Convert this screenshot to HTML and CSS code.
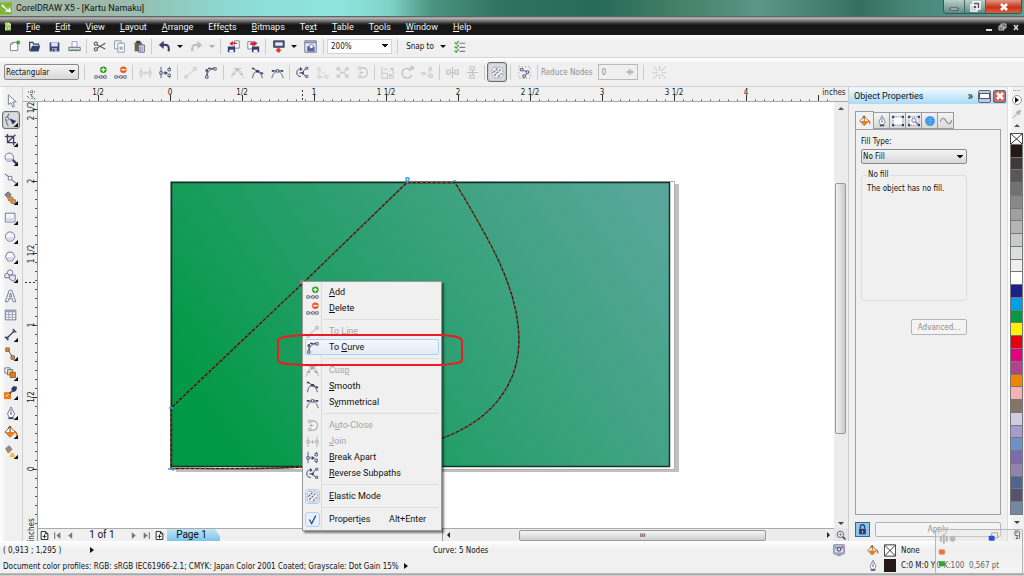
FILE: index.html
```html
<!DOCTYPE html>
<html lang="en">
<head>
<meta charset="utf-8">
<title>CorelDRAW X5 - [Kartu Namaku]</title>
<link rel="stylesheet" href="styles.css">
</head>
<body>
<svg class="defs" aria-hidden="true">
  <defs>
    <g id="corner"><path d="M16 11v5h-5z" fill="#111"/></g>
    <symbol id="logo" viewBox="0 0 16 16"><path d="M0 0h16v16H0z" fill="#7db733"/><path d="M3 2l9 7 1-4 2 8-9-1 3-2-7-5z" fill="#fff"/><path d="M5 4l6 5" stroke="#3b7a1c"/></symbol>
    <symbol id="doc" viewBox="0 0 16 16"><path d="M2 0h8l4 4v12H2z" fill="#b8dd7c"/><path d="M10 0v4h4" fill="#fff"/><path d="M3 5l7 5 1-3 2 7-7-1 2-2-5-4z" fill="#fff" stroke="#3f7b1d"/></symbol>
    <symbol id="new" viewBox="0 0 16 16"><path d="M3 5l2-2h7v10H3z" fill="#fff" stroke="#687090"/><path d="M3 5h3V3" fill="none" stroke="#687090"/><circle cx="12.500" cy="3" r="2.500" fill="#3fa535"/></symbol>
    <symbol id="open" viewBox="0 0 16 16"><path d="M2 13V3h4l1 2h6v2" fill="none" stroke="#34406c" stroke-width="1.500"/><path d="M2 14l3-7h10l-2 7z" fill="#34406c"/></symbol>
    <symbol id="save" viewBox="0 0 16 16"><path d="M2 3h12v11H2z" fill="#3a4678"/><path d="M4 3h8v5H4z" fill="#dfe3f2"/><path d="M5 10h6v4H5z" fill="#a9b1d0"/><path d="M6 11h2v3H6z" fill="#34406c"/></symbol>
    <symbol id="print" viewBox="0 0 16 16"><path d="M5 2h6v7H5z" fill="#fff" stroke="#8490b0"/><path d="M1 9h14v4H1z" fill="#dfe3ea" stroke="#4c567c"/><path d="M3 12h10" stroke="#59a04a"/></symbol>
    <symbol id="cut" viewBox="0 0 16 16"><g fill="none" stroke="#4a4f63" stroke-width="1.300"><circle cx="3.500" cy="4.500" r="2"/><circle cx="3.500" cy="11.500" r="2"/><path d="M5 6l10 5M5 10l10-6"/></g></symbol>
    <symbol id="copy" viewBox="0 0 16 16"><path d="M2 1h8v10H2z" fill="#f4f6fa" stroke="#7d88a5"/><path d="M6 4h8v11H6z" fill="#fff" stroke="#7d88a5"/><path d="M8 8h4v4H8z" fill="#9cb7a9"/></symbol>
    <symbol id="paste" viewBox="0 0 16 16"><path d="M2 3h9v11H2z" fill="#6f6347"/><path d="M4 1h5v3H4z" fill="#3b3a3c"/><path d="M7 6h7v9H7z" fill="#d2dae8" stroke="#4c567c"/><path d="M9 8v6M11 8v6" stroke="#7d88a5"/></symbol>
    <symbol id="undo" viewBox="0 0 16 16"><path d="M6 6h3c4 0 5 3 4 8" fill="none" stroke="#3c4266" stroke-width="2.500"/><path d="M1 6l6-5v10z" fill="#3c4266"/></symbol>
    <symbol id="redo" viewBox="0 0 16 16"><path d="M10 6H7c-4 0-5 3-4 8" fill="none" stroke="#bfbfbf" stroke-width="2.500"/><path d="M15 6L9 1v10z" fill="#bfbfbf"/></symbol>
    <symbol id="import" viewBox="0 0 16 16"><path d="M9 1h6v9H9z" fill="#fff" stroke="#687090"/><path d="M1 8h9v7H1z" fill="#34406c"/><path d="M3 12h5v3H3z" fill="#fff"/><path d="M12 3v2H7v2L3 5l4-4v2z" fill="#d81e2a"/></symbol>
    <symbol id="export" viewBox="0 0 16 16"><path d="M1 2h6v9H1z" fill="#fff" stroke="#687090"/><path d="M6 8h9v7H6z" fill="#34406c"/><path d="M8 12h5v3H8z" fill="#fff"/><path d="M4 3v3h4v2l5-4-5-3v2z" fill="#d81e2a"/></symbol>
    <symbol id="launch" viewBox="0 0 16 16"><path d="M2 1h13v8H2z" fill="#515a7c" stroke="#2c3350"/><path d="M4 3h9v4H4z" fill="#e8ecf5"/><path d="M8 16l-4-4h2v-2h4v2h2z" fill="#e4361e"/></symbol>
    <symbol id="welcome" viewBox="0 0 16 16"><path d="M1 1h14v14H1z" fill="#e6eaf5" stroke="#55608c"/><path d="M1 2h14v2H1z" fill="#7c87b0"/><path d="M4 14V8l3-1 1 3 5-2v6z" fill="#56629a"/><circle cx="9" cy="8" r="2.500" fill="#fff" stroke="#5a6795"/></symbol>
    <symbol id="options" viewBox="0 0 16 16"><path d="M8 4h7M8 9h7M8 14h7" stroke="#7678a0" stroke-width="1.500"/><path d="M2 3l2 2 3-4M2 8l2 2 3-4M2 13l2 2 3-4" fill="none" stroke="#3f9a38" stroke-width="1.500"/></symbol>

    <symbol id="add" viewBox="0 0 16 16"><path d="M1 12h3v3H1zM7 12h3v3H7zM12 12h3v3h-3zM4 13.500h3M10 13.500h2" fill="#fff" stroke="#4d5274"/><circle cx="11.500" cy="4.500" r="4" fill="#2f9c1e"/><path d="M9 4.500h5M11.500 2v5" stroke="#fff" stroke-width="1.500"/></symbol>
    <symbol id="del" viewBox="0 0 16 16"><path d="M1 12h3v3H1zM7 12h3v3H7zM12 12h3v3h-3zM4 13.500h3M10 13.500h2" fill="#fff" stroke="#4d5274"/><circle cx="11.500" cy="4.500" r="4" fill="#f2561d"/><path d="M9 4.500h5" stroke="#fff" stroke-width="1.700"/></symbol>
    <symbol id="join" viewBox="0 0 16 16"><g fill="none" stroke="currentColor"><path d="M1 7h3v3H1zM2.500 7V2M2.500 10v5M12 7h3v3h-3zM13.500 7V2M13.500 10v5M5 8.500h6M8 6.500v4"/></g></symbol>
    <symbol id="break" viewBox="0 0 16 16"><g fill="none" stroke="currentColor"><path d="M1 7h3v3H1zM2.500 7V1M2.500 10v5M11 3h3v3h-3zM11 10h3v3h-3zM13 3V1M13 13v2M5 8.500h5"/></g><path d="M7 6l4 2.500L7 11z" fill="currentColor"/></symbol>
    <symbol id="line" viewBox="0 0 16 16"><path d="M1 12h3v3H1zM12 2h3v3h-3zM4 12l8-7" fill="none" stroke="currentColor"/></symbol>
    <symbol id="curve" viewBox="0 0 16 16"><path d="M2 12h3v3H2zM12 2h3v3h-3zM3.500 12V7M4 12c0-5 3-8 8-8.500M12 3H7" fill="none" stroke="currentColor"/><path d="M2 4h3v3H2zM5 2h3v2H5z" fill="currentColor"/></symbol>
    <symbol id="cusp" viewBox="0 0 16 16"><path d="M1 15C1 9 4 5 8 4c4 1 6 5 7 11M8 5l-5 6M8 5l4 6M3 3h10" fill="none" stroke="currentColor"/><path d="M6 3h4v3H6zM2 9h3v2H2zM11 9h3v2h-3z" fill="currentColor"/></symbol>
    <symbol id="smooth" viewBox="0 0 16 16"><path d="M2 15C2 11 4 7 7 6.500c4 1 6 4 7 8.500M2 3l12 6" fill="none" stroke="currentColor"/><path d="M1 2h3v2H1zM6 5h4v3H6zM12 8h3v2h-3z" fill="currentColor"/></symbol>
    <symbol id="sym" viewBox="0 0 16 16"><path d="M1 15C2 10 5 6.500 8 6.500S14 10 15 15M2 6h12" fill="none" stroke="currentColor"/><path d="M1 5h3v2H1zM12 5h3v2h-3z" fill="currentColor"/><path d="M6.500 4.500h3v3h-3z" fill="#fff" stroke="currentColor"/></symbol>
    <symbol id="reverse" viewBox="0 0 16 16"><path d="M6 4C2 3 1 6 1 8.500S3 13 6 13M12 3c-2 1-3 4-3 5s1 4 3 5M4 8.500h5" fill="none" stroke="currentColor" stroke-width="1.200"/><path d="M5 1l3 3-3 2zM9 6v5L6 8.500z" fill="currentColor"/><path d="M12 1.500h2.500V4H12zM12 11.500h2.500V14H12z" fill="#fff" stroke="currentColor"/></symbol>
    <symbol id="extract" viewBox="0 0 16 16"><path d="M2 2h3v3H2zM2 12h3v3H2zM12 12h3v3h-3zM3.500 5v7M5 13.500h7M5 5l7 7" fill="none" stroke="currentColor" stroke-dasharray="2 1"/></symbol>
    <symbol id="extend" viewBox="0 0 16 16"><path d="M2 2l5 6-5 6M14 2L9 8l5 6M1 2h3v3H1zM1 11h3v3H1zM12 2h3v3h-3zM12 11h3v3h-3zM5 8h6" fill="none" stroke="currentColor"/></symbol>
    <symbol id="close" viewBox="0 0 16 16"><path d="M6 2.500c6-1 8 2 8 5.500s-2 7-8 5.500" fill="none" stroke="currentColor" stroke-width="1.300"/><path d="M3 1.500h3v3H3zM3 11.500h3v3H3zM4 8h5M6.500 6v4" fill="none" stroke="currentColor"/></symbol>
    <symbol id="stretch" viewBox="0 0 16 16"><path d="M1 1v14h14V5M1 9h7v6M3 4h5M10 7l4-4" fill="none" stroke="currentColor"/><path d="M11 2h4v4zM10 10h3v3h-3z" fill="currentColor"/></symbol>
    <symbol id="rotate" viewBox="0 0 16 16"><path d="M12 5A6 6 0 1 0 13 11" fill="none" stroke="currentColor" stroke-width="1.700"/><path d="M10 6l5-5M11 1h4v4" fill="none" stroke="currentColor" stroke-width="1.500"/></symbol>
    <symbol id="align" viewBox="0 0 16 16"><path d="M1 8h3v3H1zM10 2h3v3h-3zM10 11h4v3h-4zM4 9h3M7 11l3 2M11 5v6" fill="none" stroke="currentColor"/></symbol>
    <symbol id="refh" viewBox="0 0 16 16"><path d="M1 5h4v5H1zM11 5h4v5h-4zM8 1v14M5 8h6" fill="none" stroke="currentColor" stroke-width="1.300"/></symbol>
    <symbol id="refv" viewBox="0 0 16 16"><path d="M5 1h5v4H5zM5 11h5v4H5zM1 8h14M8 5v6" fill="none" stroke="currentColor" stroke-width="1.300"/></symbol>
    <symbol id="elastic" viewBox="0 0 16 16"><rect x="1.500" y="1.500" width="13" height="13" rx="3" fill="#f2f2f8" stroke="#8a8eaa" stroke-dasharray="3 1"/><path d="M3 8l5-5M4 12l8-8M9 13l4-4" stroke="#6a6f92" stroke-width="1.500" stroke-dasharray="3 1"/></symbol>
    <symbol id="selall" viewBox="0 0 16 16"><path d="M1 1h14v14H1z" fill="none" stroke="#555" stroke-dasharray="1 3"/><path d="M3 3h3v3H3zM10 6h3v3h-3zM6 11h3v3H6z" fill="#fff" stroke="#3c4266"/><path d="M6 5l4 2M11 9l-2 3" stroke="#3c4266"/></symbol>
    <symbol id="box" viewBox="0 0 16 16"><path d="M1 1l5 5M15 1l-5 5M1 15l5-5M15 15l-5-5M8 0v5M8 11v5M0 8h5M11 8h5" stroke="currentColor" stroke-width="1.400" stroke-dasharray="2 1"/></symbol>

    <symbol id="pick" viewBox="0 0 16 16"><path d="M5 1v11l3-2 2 5 2-1-2-5h4z" fill="#fff" stroke="#6d7496"/></symbol>
    <symbol id="shape" viewBox="0 0 16 16"><path d="M6 1c-5 5-4 10-1 14" fill="none" stroke="#687090" stroke-width="1.300"/><path d="M2 5h3v3H2z" fill="#fff" stroke="#687090"/><path d="M6 6l8 3-4 4z" fill="#30385f"/><use href="#corner"/></symbol>
    <symbol id="crop" viewBox="0 0 16 16"><path d="M4 1v10h10M1 4h10v10M4 11l9-9" fill="none" stroke="#3c4266" stroke-width="1.500"/><use href="#corner"/></symbol>
    <symbol id="zoom" viewBox="0 0 16 16"><circle cx="6" cy="6" r="4.800" fill="#f4f4fc" stroke="#5f6688"/><path d="M2 7a4 4 0 0 0 8 0z" fill="#c8cade"/><path d="M10 9l4 4" stroke="#3c4266" stroke-width="2.500"/><use href="#corner"/></symbol>
    <symbol id="free" viewBox="0 0 16 16"><path d="M1 2l5 4M9 9l5 4" stroke="#3c4266"/><path d="M5 5h4v4H5z" fill="#fff" stroke="#687090"/><use href="#corner"/></symbol>
    <symbol id="smart" viewBox="0 0 16 16"><path d="M1 4l4-3 3 3-3 5z" fill="#8a8794" stroke="#55596f"/><path d="M5 7h5v4H5zM8 10h5v4H8z" fill="#e9a052" stroke="#77695f"/><path d="M4 6l3 5 3-1" fill="none" stroke="#e9861b" stroke-width="2"/><use href="#corner"/></symbol>
    <symbol id="rect" viewBox="0 0 16 16"><path d="M1.500 2.500h11v10h-11z" fill="#f5f5fc" stroke="#62688c"/><path d="M2 8h10v4H2z" fill="#d9dbea"/><use href="#corner"/></symbol>
    <symbol id="ellipse" viewBox="0 0 16 16"><circle cx="7" cy="7.500" r="5.300" fill="#f5f5fc" stroke="#62688c"/><path d="M3 8a4 4 0 0 0 8 0z" fill="#d9dbea"/><use href="#corner"/></symbol>
    <symbol id="poly" viewBox="0 0 16 16"><path d="M1.500 7.500l3-5h5l3 5-3 5h-5z" fill="#f5f5fc" stroke="#62688c"/><path d="M3 8h8l-2 4H5z" fill="#d9dbea"/><use href="#corner"/></symbol>
    <symbol id="shapes" viewBox="0 0 16 16"><path d="M1 6l4-2 2 6H1z" fill="#eee" stroke="#62688c"/><circle cx="7" cy="4" r="3" fill="#f5f5fc" stroke="#62688c"/><path d="M6 7h7v5l-3 2-4-3z" fill="#e2e3f0" stroke="#62688c"/><use href="#corner"/></symbol>
    <symbol id="text" viewBox="0 0 16 16"><path d="M1.500 14.500L6 1.500h3l4.500 13h-3L9.500 11h-4l-1 3.500zM7.500 4.500L6 9h3z" fill="#f6f6fc" stroke="#6a6f92"/></symbol>
    <symbol id="table" viewBox="0 0 16 16"><path d="M1.500 2.500h12v11h-12z" fill="#fff" stroke="#62688c"/><path d="M2 4h11" stroke="#9a9ebb" stroke-width="2"/><path d="M2 7.500h11M2 10.500h11M5.500 4v9M9.500 4v9" stroke="#8d92b0"/></symbol>
    <symbol id="dim" viewBox="0 0 16 16"><path d="M3 12l9-9M1 10l4 4M10 1l4 4" stroke="#3c4266" stroke-width="1.500"/><path d="M3 9v3h3zM9 3h3v3z" fill="#3c4266"/><use href="#corner"/></symbol>
    <symbol id="connect" viewBox="0 0 16 16"><path d="M5 4l5 8" stroke="#444"/><path d="M2 1h4v4H2zM8 10h4v4H8z" fill="#ef8719" stroke="#725c5a"/><use href="#corner"/></symbol>
    <symbol id="blend" viewBox="0 0 16 16"><path d="M1 1h6v6H1z" fill="#fff" stroke="#62688c"/><path d="M4 3h6v6H4z" fill="#f7d27a" stroke="#62688c"/><path d="M7 6h6v6H7z" fill="#ee7c14" stroke="#7c5a3a"/><use href="#corner"/></symbol>
    <symbol id="eyedrop" viewBox="0 0 16 16"><path d="M0 7h8v8H0z" fill="#ee7c14"/><path d="M2 12l5-4" stroke="#fff"/><path d="M6 9l5-5" stroke="#4d5274" stroke-width="2"/><path d="M8 3l3-3 4 1-1 4-3 2z" fill="#30385f"/><use href="#corner"/></symbol>
    <symbol id="pen" viewBox="0 0 16 16"><path d="M6 13l-2-4 4-8 4 8-2 4z" fill="#fff" stroke="#62688c"/><path d="M8 4v5" stroke="#62688c"/><circle cx="8" cy="9" r="1" fill="#62688c"/><path d="M5 14h6" stroke="#3c4266" stroke-width="2"/></symbol>
    <symbol id="pent" viewBox="0 0 16 16"><use href="#pen"/><use href="#corner"/></symbol>
    <symbol id="fill" viewBox="0 0 16 16"><path d="M1 8l6-6 6 6-6 6z" fill="#fff" stroke="#5b4a4a"/><path d="M2 8h11l-6 6z" fill="#e9811a"/><path d="M7 1v7M12 7c2 1 3 3 2 5" fill="none" stroke="#c96a14" stroke-width="1.600"/><path d="M5 4c0-3 3-3 3-1" fill="none" stroke="#444"/></symbol>
    <symbol id="fillt" viewBox="0 0 16 16"><use href="#fill"/><use href="#corner"/></symbol>
    <symbol id="ifill" viewBox="0 0 16 16"><path d="M2 4l4-3 3 4-4 4z" fill="#9b8d85" stroke="#62688c"/><path d="M4 5l4 0-3 3z" fill="#e9811a"/><path d="M8 9h3l2 5H6z" fill="#f5bd45"/><use href="#corner"/></symbol>

    <symbol id="nodes" viewBox="0 0 16 16"><path d="M1.500 2.500h13v11h-13z" fill="#fff" stroke="#70749a" stroke-dasharray="2 1"/><path d="M0 1h3v3H0zM13 1h3v3h-3zM0 12h3v3H0zM13 12h3v3h-3z" fill="#3c4266"/></symbol>
    <symbol id="nodez" viewBox="0 0 16 16"><use href="#nodes"/><circle cx="8" cy="7" r="3" fill="#e9eaf5" stroke="#62688c"/><path d="M10 9l4 4" stroke="#62688c" stroke-width="1.500"/></symbol>
    <symbol id="globe" viewBox="0 0 16 16"><circle cx="8" cy="8" r="6.500" fill="#2a86e0"/><path d="M2 5h12M1 8h14M2 11h12M8 1v14" fill="none" stroke="#7cc0f6"/></symbol>
    <symbol id="wave" viewBox="0 0 16 16"><path d="M0 9c3-7 6-5 8-1s5 6 8-1" fill="none" stroke="#8a8a8a" stroke-width="1.500"/></symbol>
    <symbol id="lock" viewBox="0 0 16 16"><path d="M3 7h10v8H3z" fill="#34406c"/><path d="M5 7V4a3 3 0 0 1 6 0v3" fill="none" stroke="#34406c" stroke-width="2"/><path d="M8 10v3" stroke="#cbd" stroke-width="1.500"/></symbol>
    <symbol id="mag" viewBox="0 0 16 16"><circle cx="7" cy="7" r="5" fill="#fff" stroke="#4d5274" stroke-width="1.500"/><path d="M4 7h6M7 4v6" stroke="#4d5274"/><path d="M11 11l4 4" stroke="#3c4266" stroke-width="2.500"/></symbol>
    <symbol id="proof" viewBox="0 0 16 16"><rect x="0.500" y="0.500" width="15" height="13" rx="2" fill="#a9aecb" stroke="#7d83a8"/><path d="M3 3h10v8H3z" fill="#e8e4ee"/><circle cx="8" cy="7" r="2.500" fill="none" stroke="#4d5274" stroke-width="1.500"/><path d="M3 3h2v3H3z" fill="#3a9"/><path d="M11 3h2v3h-2z" fill="#d33"/><path d="M5 15h6" stroke="#8a90b2" stroke-width="2"/></symbol>
    <symbol id="none" viewBox="0 0 16 16"><path d="M.5.5h15v15H.5zM1 1l14 14M15 1L1 15" fill="#fff" stroke="#222" stroke-width="1.200"/></symbol>
    <symbol id="addpage" viewBox="0 0 16 16"><path d="M2 1h8l4 4v10H2z" fill="#fff" stroke="#222" stroke-width="1.700"/><path d="M10 1v4h4M8 6v7M4.500 9.500h7" fill="none" stroke="#222" stroke-width="1.700"/></symbol>
    <symbol id="first" viewBox="0 0 16 16"><path d="M3 2v12" stroke="#777" stroke-width="2"/><path d="M13 2v12L6 8z" fill="#777"/></symbol>
    <symbol id="prev" viewBox="0 0 16 16"><path d="M11 2v12L4 8z" fill="#777"/></symbol>
    <symbol id="next" viewBox="0 0 16 16"><path d="M5 2v12l7-6z" fill="#777"/></symbol>
    <symbol id="last" viewBox="0 0 16 16"><path d="M13 2v12" stroke="#777" stroke-width="2"/><path d="M3 2v12l7-6z" fill="#777"/></symbol>
    <symbol id="flyout" viewBox="0 0 16 16"><path d="M4 0v7l7-7zM13 1v14M4 9h6l-4 6h5" fill="none" stroke="#222" stroke-width="2"/></symbol>
    <symbol id="check" viewBox="0 0 16 16"><path d="M4 8l3 5 5-10" fill="none" stroke="#3948a8" stroke-width="1.700"/></symbol>
    <symbol id="dropper" viewBox="0 0 16 16"><path d="M1 15L9 7M8 4l4 4 3-6-2-1z" fill="#bbb" stroke="#b4b4b4" stroke-width="2"/></symbol>
  </defs>
</svg>

<div class="app">
  <header class="titlebar">
    <svg class="logo"><use href="#logo"/></svg>
    <h1 class="title">CorelDRAW X5 - [Kartu Namaku]</h1>
    <div class="winbtns">
      <button class="wb" aria-label="Minimize"><svg viewBox="0 0 16 12"><path d="M4 7h8v2H4z" fill="#fff" stroke="#445"/></svg></button>
      <button class="wb" aria-label="Restore"><svg viewBox="0 0 16 12"><path d="M6 1h7v7H6zM4 4h6v6H4z" fill="#556" stroke="#fff" stroke-width="1.500"/></svg></button>
      <button class="wb red" aria-label="Close"><svg viewBox="0 0 16 12"><path d="M5 3l6 6M11 3L5 9" stroke="#fff" stroke-width="2.500"/></svg></button>
    </div>
  </header>

  <nav class="menubar">
    <svg class="mlogo"><use href="#doc"/></svg>
    <button><u>F</u>ile</button><button><u>E</u>dit</button><button><u>V</u>iew</button><button><u>L</u>ayout</button><button><u>A</u>rrange</button><button>Effe<u>c</u>ts</button><button><u>B</u>itmaps</button><button>Te<u>x</u>t</button><button><u>T</u>able</button><button>T<u>o</u>ols</button><button><u>W</u>indow</button><button><u>H</u>elp</button>
    <span class="mdi"><svg viewBox="0 0 40 10"><path d="M2 8h6" stroke="#ddd" stroke-width="2"/><path d="M17 2h5v4h-5zM15 4h5v4h-5z" fill="#444" stroke="#ccc"/><path d="M30 3l4 5M34 3l-4 5" stroke="#ddd" stroke-width="1.500"/></svg></span>
  </nav>

  <div class="toolbar std">
    <button class="ib" aria-label="New"><svg><use href="#new"/></svg></button>
    <button class="ib" aria-label="Open"><svg><use href="#open"/></svg></button>
    <button class="ib" aria-label="Save"><svg><use href="#save"/></svg></button>
    <button class="ib" aria-label="Print"><svg><use href="#print"/></svg></button>
    <i class="sep"></i>
    <button class="ib" aria-label="Cut"><svg><use href="#cut"/></svg></button>
    <button class="ib" aria-label="Copy"><svg><use href="#copy"/></svg></button>
    <button class="ib" aria-label="Paste"><svg><use href="#paste"/></svg></button>
    <i class="sep"></i>
    <button class="ib" aria-label="Undo"><svg><use href="#undo"/></svg></button>
    <button class="dd" aria-label="Undo list"></button>
    <button class="ib" aria-label="Redo"><svg><use href="#redo"/></svg></button>
    <button class="dd off" aria-label="Redo list"></button>
    <i class="sep"></i>
    <button class="ib" aria-label="Import"><svg><use href="#import"/></svg></button>
    <button class="ib" aria-label="Export"><svg><use href="#export"/></svg></button>
    <i class="sep"></i>
    <button class="ib" aria-label="Application launcher"><svg><use href="#launch"/></svg></button>
    <button class="dd" aria-label="Launcher list"></button>
    <button class="ib" aria-label="Welcome screen"><svg><use href="#welcome"/></svg></button>
    <i class="sep mid"></i>
    <select class="zoomlevel" aria-label="Zoom level"><option>200%</option></select>
    <i class="sep wide"></i>
    <button class="snap">Snap to</button>
    <button class="dd" aria-label="Snap list"></button>
    <button class="ib" aria-label="Options"><svg><use href="#options"/></svg></button>
  </div>

  <div class="toolbar prop">
    <select class="mode" aria-label="Selection mode"><option>Rectangular</option></select>
    <i class="sep wide"></i>
    <button class="ib" aria-label="Add node"><svg><use href="#add"/></svg></button>
    <button class="ib" aria-label="Delete node"><svg><use href="#del"/></svg></button>
    <i class="sep"></i>
    <button class="ib" disabled aria-label="Join nodes"><svg><use href="#join"/></svg></button>
    <button class="ib" aria-label="Break curve"><svg><use href="#break"/></svg></button>
    <i class="sep"></i>
    <button class="ib" disabled aria-label="To line"><svg><use href="#line"/></svg></button>
    <button class="ib" aria-label="To curve"><svg><use href="#curve"/></svg></button>
    <i class="sep mid"></i>
    <button class="ib" disabled aria-label="Cusp"><svg><use href="#cusp"/></svg></button>
    <button class="ib" aria-label="Smooth"><svg><use href="#smooth"/></svg></button>
    <button class="ib" aria-label="Symmetrical"><svg><use href="#sym"/></svg></button>
    <i class="sep"></i>
    <button class="ib" aria-label="Reverse direction"><svg><use href="#reverse"/></svg></button>
    <button class="ib" disabled aria-label="Extract subpath"><svg><use href="#extract"/></svg></button>
    <button class="ib" disabled aria-label="Extend curve"><svg><use href="#extend"/></svg></button>
    <button class="ib" disabled aria-label="Close curve"><svg><use href="#close"/></svg></button>
    <i class="sep"></i>
    <button class="ib" disabled aria-label="Stretch nodes"><svg><use href="#stretch"/></svg></button>
    <button class="ib" disabled aria-label="Rotate nodes"><svg><use href="#rotate"/></svg></button>
    <button class="ib" disabled aria-label="Align nodes"><svg><use href="#align"/></svg></button>
    <i class="sep"></i>
    <button class="ib" disabled aria-label="Reflect horizontally"><svg><use href="#refh"/></svg></button>
    <button class="ib" disabled aria-label="Reflect vertically"><svg><use href="#refv"/></svg></button>
    <i class="sep"></i>
    <button class="ib pressed" aria-label="Elastic mode"><svg><use href="#elastic"/></svg></button>
    <i class="sep mid"></i>
    <button class="ib" aria-label="Select all nodes"><svg><use href="#selall"/></svg></button>
    <i class="sep mid"></i>
    <label class="reduce" for="smoothness">Reduce Nodes</label>
    <span class="spin"><input id="smoothness" type="text" value="0" disabled><svg viewBox="0 0 12 10"><path d="M0 5l4-3v2h4V2l4 3-4 3V6H4v2zM5 0h2v10H5z" fill="#b4b4b4"/></svg></span>
    <i class="sep wide"></i>
    <button class="ib" disabled aria-label="Bounding box"><svg><use href="#box"/></svg></button>
  </div>

  <main class="work">
    <aside class="toolbox">
      <button aria-label="Pick"><svg><use href="#pick"/></svg></button>
      <button class="pressed" aria-label="Shape"><svg><use href="#shape"/></svg></button>
      <button aria-label="Crop"><svg><use href="#crop"/></svg></button>
      <button aria-label="Zoom"><svg><use href="#zoom"/></svg></button>
      <button aria-label="Freehand"><svg><use href="#free"/></svg></button>
      <button aria-label="Smart fill"><svg><use href="#smart"/></svg></button>
      <button aria-label="Rectangle"><svg><use href="#rect"/></svg></button>
      <button aria-label="Ellipse"><svg><use href="#ellipse"/></svg></button>
      <button aria-label="Polygon"><svg><use href="#poly"/></svg></button>
      <button aria-label="Basic shapes"><svg><use href="#shapes"/></svg></button>
      <button aria-label="Text"><svg><use href="#text"/></svg></button>
      <button aria-label="Table"><svg><use href="#table"/></svg></button>
      <button aria-label="Dimension"><svg><use href="#dim"/></svg></button>
      <button aria-label="Connector"><svg><use href="#connect"/></svg></button>
      <button aria-label="Blend"><svg><use href="#blend"/></svg></button>
      <button aria-label="Eyedropper"><svg><use href="#eyedrop"/></svg></button>
      <button aria-label="Outline pen"><svg><use href="#pent"/></svg></button>
      <button aria-label="Fill"><svg><use href="#fillt"/></svg></button>
      <button aria-label="Interactive fill"><svg><use href="#ifill"/></svg></button>
    </aside>

    <section class="view">
      <svg class="hruler">
        <g transform="translate(-23 -87)">
          <path d="M44 100.500H834" stroke="#555" stroke-width="2" stroke-dasharray="1 8"/>
          <path d="M98 98.500H834" stroke="#333" stroke-width="7" stroke-dasharray="1 71"/>
          <path d="M302.500 90v12" stroke="#333" stroke-dasharray="2 2"/>
          <path d="M28 92l8 0M32 90v10M27 96l3 3M30 94l6 6" stroke="#333" stroke-dasharray="1 1"/>
          <g class="rt" text-anchor="middle">
            <text x="98" y="95">1/2</text><text x="170" y="95">0</text><text x="242" y="95">1/2</text><text x="314" y="95">1</text><text x="386" y="95">1 1/2</text><text x="458" y="95">2</text><text x="530" y="95">2 1/2</text><text x="602" y="95">3</text><text x="674" y="95">3 1/2</text><text x="746" y="95">4</text><text x="834" y="95">inches</text>
          </g>
        </g>
      </svg>
      <svg class="vruler">
        <g transform="translate(-23 -102)">
          <path d="M36 109V528" stroke="#555" stroke-width="2" stroke-dasharray="1 8"/>
          <path d="M35 109V528" stroke="#333" stroke-width="5" stroke-dasharray="1 71"/>
          <path d="M25 282.500h12" stroke="#333" stroke-dasharray="2 2"/>
          <g class="rt" text-anchor="middle">
            <text transform="translate(34 111) rotate(-90)">2 1/2</text><text transform="translate(34 181) rotate(-90)">2</text><text transform="translate(34 254) rotate(-90)">1 1/2</text><text transform="translate(34 325) rotate(-90)">1</text><text transform="translate(34 397) rotate(-90)">1/2</text><text transform="translate(34 469) rotate(-90)">0</text><text transform="translate(34 530) rotate(-90)">inches</text>
          </g>
        </g>
      </svg>
      <svg class="canvas">
        <defs>
          <linearGradient id="card" gradientUnits="userSpaceOnUse" x1="215" y1="440" x2="630" y2="165"><stop offset="0" stop-color="#009944"/><stop offset="0.500" stop-color="#30a074"/><stop offset="1" stop-color="#58a79a"/></linearGradient>
          <path id="outline" d="M171 408L303 283 407 182.500H455C490 240 519 290 519 340 519 388 488 421 443 438 400 457 350 466 303 467 250 470 220 468 171 468.500Z"/>
        </defs>
        <g transform="translate(-38 -102)">
          <path d="M176 184h503v288H176z" fill="#bfbfbf"/>
          <path d="M170.500 181.500h504v288h-504z" fill="#fff" stroke="#b0b0b0"/>
          <path d="M171.500 182.500h498v284h-498z" fill="url(#card)" stroke="#173324" stroke-width="1.500"/>
          <g fill="none" stroke-width="1.300">
            <use href="#outline" stroke="#1b201b"/>
            <use href="#outline" stroke="#b5502e" stroke-dasharray="2 3"/>
            <path d="M406 178h3v3h-3zM407.500 181v2M453 181h3M169 408h4M168 469h5v2" stroke="#3d9be9"/>
          </g>
          <circle cx="302" cy="282" r="2" fill="#e0609c"/>
        </g>
      </svg>
      <div class="vscroll"><b class="up"></b><div class="vthumb"></div><b class="down"></b></div>
      <div class="pages">
        <button class="pb" aria-label="Add page"><svg><use href="#addpage"/></svg></button>
        <button class="pb" aria-label="First"><svg><use href="#first"/></svg></button>
        <button class="pb" aria-label="Previous"><svg><use href="#prev"/></svg></button>
        <span class="pcount">1 of 1</span>
        <button class="pb" aria-label="Next"><svg><use href="#next"/></svg></button>
        <button class="pb" aria-label="Last"><svg><use href="#last"/></svg></button>
        <button class="pb" aria-label="Add page after"><svg><use href="#addpage"/></svg></button>
        <button class="ptab">Page 1</button>
        <span class="fillspace"></span>
        <div class="hscroll"><b class="left"></b><div class="hthumb">III</div><b class="right"></b></div>
      </div>
      <div class="zcorner"><svg><use href="#mag"/></svg></div>
    </section>

    <aside class="docker">
      <header class="dhead"><h2>Object Properties</h2><span class="chev">»</span>
        <button class="dmin" aria-label="Minimize docker"></button>
        <button class="dclose" aria-label="Close docker"><svg viewBox="0 0 10 10"><path d="M2 2l6 6M8 2L2 8" stroke="#fff" stroke-width="2.500"/></svg></button></header>
      <div class="dbody">
        <div class="tabs">
          <button class="tab on" aria-label="Fill"><svg><use href="#fill"/></svg></button>
          <button class="tab" aria-label="Outline"><svg><use href="#pen"/></svg></button>
          <button class="tab" aria-label="General"><svg><use href="#nodes"/></svg></button>
          <button class="tab" aria-label="Detail"><svg><use href="#nodez"/></svg></button>
          <button class="tab" aria-label="Internet"><svg><use href="#globe"/></svg></button>
          <button class="tab" aria-label="Curve"><svg><use href="#wave"/></svg></button>
        </div>
        <div class="panel">
          <label for="filltype">Fill Type:</label>
          <select id="filltype"><option>No Fill</option></select>
          <fieldset><legend>No fill</legend><p>The object has no fill.</p></fieldset>
          <button class="adv" disabled>Advanced...</button>
        </div>
        <div class="applyrow"><button class="lock" aria-label="Auto apply"><svg><use href="#lock"/></svg></button><button class="apply" disabled>Apply</button></div>
      </div>
    </aside>

    <aside class="palette">
      <div class="ptop"><i class="dots"></i><button class="play" aria-label="Palette menu"></button><svg><use href="#dropper"/></svg><b class="up"></b></div>
      <div class="swatches">
        <svg class="nosw" viewBox="0 0 16 16" preserveAspectRatio="none"><use href="#none"/></svg>
        <i style="background:#231815"></i><i style="background:#3e3a39"></i><i style="background:#595757"></i><i style="background:#727171"></i><i style="background:#888888"></i><i style="background:#9fa0a0"></i><i style="background:#b5b5b6"></i><i style="background:#c9caca"></i><i style="background:#dcdddd"></i><i style="background:#efefef"></i><i style="background:#ffffff"></i><i style="background:#1d2088"></i><i style="background:#00a0e9"></i><i style="background:#009944"></i><i style="background:#fff100"></i><i style="background:#e60012"></i><i style="background:#e4007f"></i><i style="background:#b04489"></i><i style="background:#f18500"></i><i style="background:#f5b2b2"></i><i style="background:#85746a"></i><i style="background:#d0cce6"></i><i style="background:#a79bcd"></i><i style="background:#7090c8"></i><i style="background:#7c6bb2"></i><i style="background:#9184ae"></i><i style="background:#4f6590"></i><i style="background:#5a5070"></i><i style="background:#7388a3"></i>
      </div>
      <div class="pbot"><b class="down"></b><svg><use href="#flyout"/></svg></div>
    </aside>

    <div class="menu" role="menu">
      <button role="menuitem"><svg><use href="#add"/></svg><span><u>A</u>dd</span></button>
      <button role="menuitem"><svg><use href="#del"/></svg><span><u>D</u>elete</span></button>
      <hr>
      <button role="menuitem" disabled><svg><use href="#line"/></svg><span>To Line</span></button>
      <button role="menuitem" class="hot"><svg><use href="#curve"/></svg><span>To <u>C</u>urve</span></button>
      <hr>
      <button role="menuitem" disabled><svg><use href="#cusp"/></svg><span>Cus<u>p</u></span></button>
      <button role="menuitem"><svg><use href="#smooth"/></svg><span><u>S</u>mooth</span></button>
      <button role="menuitem"><svg><use href="#sym"/></svg><span>S<u>y</u>mmetrical</span></button>
      <hr>
      <button role="menuitem" disabled><svg><use href="#close"/></svg><span>A<u>u</u>to-Close</span></button>
      <button role="menuitem" disabled><svg><use href="#join"/></svg><span><u>J</u>oin</span></button>
      <button role="menuitem"><svg><use href="#break"/></svg><span><u>B</u>reak Apart</span></button>
      <button role="menuitem"><svg><use href="#reverse"/></svg><span><u>R</u>everse Subpaths</span></button>
      <hr>
      <button role="menuitem"><svg class="tick"><use href="#elastic"/></svg><span><u>E</u>lastic Mode</span></button>
      <hr>
      <button role="menuitem"><svg class="tick"><use href="#check"/></svg><span>Propert<u>i</u>es</span><kbd>Alt+Enter</kbd></button>
    </div>
    <svg class="mark" viewBox="0 0 190 34"><path d="M28 2C18 3 2 3 2 8v19c0 5 13 4 26 5h136c8-1 22-1 22-5V8c0-5-12-5-20-6z" fill="none" stroke="#ec1c24" stroke-width="2"/></svg>
  </main>

  <footer class="status">
    <div class="srow"><span class="coord">( 0,913 ; 1,295 )</span><b class="play2"></b><span class="sinfo">Curve: 5 Nodes</span>
      <svg class="proof"><use href="#proof"/></svg></div>
    <div class="srow"><span>Document color profiles: RGB: sRGB IEC61966-2.1; CMYK: Japan Color 2001 Coated; Grayscale: Dot Gain 15%</span><b class="play2 near"></b></div>
    <div class="objinfo">
      <svg><use href="#fill"/></svg><svg><use href="#none"/></svg><span>None</span>
      <svg><use href="#pen"/></svg><i class="black"></i><span>C:0 M:0 Y:0 K:100&nbsp; 0,567 pt</span>
    </div>
    <div class="tray"><svg viewBox="0 0 88 45"><path d="M5 6v6M8 4v10M11 6v6" stroke="#b4b4b4" stroke-width="2"/><circle cx="17" cy="9" r="3" fill="#b8b8b8"/><rect x="57" y="3" width="6" height="5" fill="#eee" stroke="#aaa"/><rect x="54" y="6" width="6" height="5" rx="1" fill="#2b50d8"/><rect x="3" y="20" width="6" height="5" rx="1" fill="#f2733a"/><rect x="3" y="32" width="6" height="5" rx="1" fill="#2ca52c"/></svg></div>
  </footer>
</div>
</body>
</html>
```
FILE: styles.css
```css
* { box-sizing: border-box; }
body { margin: 0; background: #f0f0f0; color: #111; font: 8px "DejaVu Sans Condensed", "DejaVu Sans", sans-serif; }
button, select, input { font: inherit; color: inherit; margin: 0; }
button { border: 0; background: none; padding: 0; }
h1, h2, p { margin: 0; font-weight: normal; }
b, i { display: block; }
.defs { position: absolute; width: 0; height: 0; }
.app { display: flex; flex-direction: column; min-height: 100vh; overflow: hidden; }

.titlebar { display: flex; align-items: center; height: 16px; padding-right: 2px; color: #111;
  background: linear-gradient(90deg, #a9bba9 0, #9fb8aa 110px, #8fc8bd 170px, #8ddcd5 240px, #8ee5df 340px, #80d2c8 390px, #4d9583 430px, #2f7360 500px, #266b57 600px, #45806a 680px, #5d9685 760px, #35705e 860px, #4a8a7d 920px, #5d9d92 100%); }
.logo { width: 12px; height: 15px; margin-right: 4px; }
.title { flex: 1; font: 9px/16px Roboto, sans-serif; }
.winbtns { display: flex; align-self: flex-start; border: 1px solid #355; border-top: 0; border-radius: 0 0 4px 4px; overflow: hidden; }
.wb { display: flex; align-items: center; justify-content: center; width: 21px; height: 13px; background: linear-gradient(#b9d0ca, #5d8a80); border-right: 1px solid #466; }
.wb svg { width: 16px; height: 12px; }
.wb.red { width: 35px; border: 0; background: linear-gradient(#e09a85, #c8331a 55%, #d8603f); }

.menubar { display: flex; align-items: center; height: 19px; padding: 2px 0 0 4px; color: #f4f4f4;
  font: 9px/14px Roboto, sans-serif; background: linear-gradient(#444 0, #bbb 2px, #8a8a8a 4px, #3c3c3c 7px, #151515 9px, #1a1a1a); }
.menubar button { margin-right: 15px; }
.mlogo { width: 8px; height: 11px; margin-right: 14px; }
.mdi { margin-left: auto; width: 40px; height: 10px; display: flex; }

.toolbar { display: flex; align-items: center; background: linear-gradient(#fff, #f0f0f0 6px); border-bottom: 1px solid #d4d4d4; }
.std { height: 23px; padding-left: 4px; }
.prop { height: 29px; padding-left: 4px; }
.ib { display: flex; align-items: center; justify-content: center; width: 20px; height: 20px; flex: none; color: #3c4266; }
.ib svg { width: 13px; height: 13px; }
.ib:disabled { color: #c0c0c4; }
.pressed { border: 1px solid #6f6f6f; border-radius: 3px; background: #dcdcdc; box-shadow: inset 0 0 2px #999; }
.sep { width: 1px; height: 15px; margin: 0 2px; background: #ccc; flex: none; }
.sep.mid { margin: 0 3px; }
.sep.wide { margin: 0 5px; }
.dd { width: 12px; height: 12px; display: flex; justify-content: center; align-items: center; flex: none; }
.dd::after { content: ""; border: 3px solid transparent; border-top-color: #111; border-bottom: 0; }
.dd.off::after { border-top-color: #aaa; }
.up { border: 3px solid transparent; border-bottom-color: #555; border-top: 0; width: 0; }
.down { border: 3px solid transparent; border-top-color: #444; border-bottom: 0; width: 0; }
.left { width: 0; border: 3px solid transparent; border-right-color: #222; border-left: 0; }
.right { width: 0; border: 3px solid transparent; border-left-color: #222; border-right: 0; }

select { appearance: none; border: 1px solid #8a8a8a; border-radius: 2px; padding: 0 3px; outline: 0;
  background-image: linear-gradient(to top right, transparent 50%, #111 50%), linear-gradient(to top left, transparent 50%, #111 50%), linear-gradient(#f5f5f5, #d8d8d8);
  background-size: 3px 4px, 3px 4px, 100% 100%; background-position: right 6px center, right 3px center, 0 0; background-repeat: no-repeat; }
.mode { width: 75px; height: 16px; padding: 0 1px; }
.zoomlevel { width: 65px; height: 15px; border-color: #cdd6e0; border-radius: 0; background-color: #fff;
  background-image: linear-gradient(to top right, transparent 50%, #111 50%), linear-gradient(to top left, transparent 50%, #111 50%); }
.snap { width: 34px; white-space: nowrap; }
.reduce { color: #8f8f8f; white-space: nowrap; margin-right: 6px; }
.spin { display: flex; align-items: center; width: 40px; height: 16px; border: 1px solid #bbb; padding-right: 3px; }
.spin input { flex: 1; min-width: 0; border: 0; padding: 0 2px; background: none; color: #888; }
.spin svg { width: 8px; height: 8px; }

.work { position: relative; flex: 1; display: flex; min-height: 0; }
.toolbox { display: flex; flex-direction: column; align-items: center; width: 23px; padding-top: 5px; background: linear-gradient(90deg, #fff, #f0f0f0 6px); border-right: 1px solid #d0d0d0; }
.toolbox button { display: flex; align-items: center; justify-content: center; width: 18px; height: 18px; margin-bottom: 2px; flex: none; }
.toolbox button:nth-child(odd) { margin-bottom: 1px; }
.toolbox svg { width: 14px; height: 14px; }

.view { flex: 1; display: grid; grid-template-columns: 15px 1fr 14px; grid-template-rows: 15px 1fr 13px; min-width: 0; }
.hruler { grid-column: 1 / 4; width: 100%; height: 15px; border-bottom: 1px solid #aaa; }
.rt { font: 8px "DejaVu Sans Condensed", sans-serif; fill: #222; }
.vruler { width: 15px; height: 100%; grid-row: 2 / 4; border-right: 1px solid #999; }
.canvas { width: 100%; height: 100%; background: #fff; }
.vscroll { display: flex; flex-direction: column; align-items: center; padding: 5px 1px 3px 0; background: #ececec; }
.vthumb { width: 11px; height: 60%; margin: 73px 0 auto; border: 1px solid #999; border-radius: 2px; background: linear-gradient(90deg, #f2f2f2, #c9c9c9); }
.pages { grid-column: 2; display: flex; align-items: center; border-top: 1px solid #aaa; background: #f0f0f0; height: 13px; font: 10px/12px Roboto, sans-serif; }
.pb { width: 13px; height: 12px; display: flex; align-items: center; justify-content: center; flex: none; }
.pb svg { width: 9px; height: 9px; }
.pcount { width: 50px; text-align: center; }
.ptab { align-self: stretch; width: 53px; margin-left: 1px; padding-right: 4px; background: linear-gradient(#bfe6f8, #7cc4ea); clip-path: polygon(0 0, 90% 0, 100% 60%, 100% 100%, 0 100%); }
.fillspace { flex: 1; }
.hscroll { width: 392px; height: 12px; display: flex; align-items: center; justify-content: space-between; padding: 0 4px; border-left: 1px solid #999; background: #ececec; }
.hthumb { width: 247px; height: 11px; margin-left: 8px; border: 1px solid #999; border-radius: 2px; background: linear-gradient(#f6f6f6, #cfcfcf); text-align: center; font: bold 5px/9px "DejaVu Sans", sans-serif; color: #555; }
.zcorner { display: flex; align-items: center; justify-content: center; background: #e4e4e4; }
.zcorner svg { width: 10px; height: 10px; }

.docker { width: 160px; display: flex; flex-direction: column; border-left: 1px solid #ccc; border-right: 1px solid #ddd; background: #f0f0f0; }
.dhead { display: flex; align-items: center; height: 16px; margin-top: 1px; padding: 0 1px 0 5px; background: linear-gradient(#f0faff, #cbeafb 50%, #a9dbf8); }
.dhead h2 { flex: 1; font: 9px/15px Roboto, sans-serif; color: #112; white-space: nowrap; }
.chev { font: 12px/12px Roboto, sans-serif; margin-right: 5px; }
.dmin, .dclose { width: 13px; height: 13px; border: 1px solid #667; border-radius: 2px; display: flex; align-items: center; justify-content: center; }
.dmin { background: #b8cbe6; margin-right: 2px; }
.dmin::after { content: ""; width: 9px; height: 4px; border: 1px solid #556; background: #fff; }
.dclose { background: #c9695f; }
.dclose svg { width: 10px; height: 10px; flex: none; }
.dbody { flex: 1; display: flex; flex-direction: column; padding: 7px 6px 4px; }
.tabs { display: flex; align-items: flex-end; height: 18px; }
.tab { width: 16px; height: 17px; border: 1px solid #9a9aa2; border-left: 0; background: linear-gradient(#f4f4f4, #dadada); display: flex; align-items: center; justify-content: center; }
.tab.on { width: 19px; height: 19px; margin-bottom: -1px; background: #f0f0f0; border-left: 1px solid #9a9aa2; border-bottom: 0; }
.tab svg { width: 12px; height: 12px; flex: none; }
.panel { flex: 1; display: flex; flex-direction: column; align-items: flex-start; padding: 6px 33px 0 5px; border: 1px solid #a0a0a8; }
.panel label { line-height: 12px; margin-bottom: 1px; }
#filltype { width: 100%; height: 15px; margin-bottom: 5px; padding: 0 1px; }
fieldset { width: 100%; height: 132px; min-width: 0; margin: 0 0 18px; padding: 2px 5px; border: 1px solid #d5dfe5; border-radius: 3px; }
legend { padding: 0 1px; line-height: 12px; }
.panel p { white-space: nowrap; line-height: 12px; }
.adv { align-self: flex-end; width: 56px; height: 16px; }
.adv, .apply { border: 1px solid #b5b5b5; border-radius: 2px; background: #f4f4f4; color: #8c8c8c; }
.applyrow { display: flex; gap: 5px; margin-top: 7px; height: 15px; }
.lock { width: 15px; height: 15px; border: 1px solid #2b6a9a; background: #8cc6ec; display: flex; align-items: center; justify-content: center; }
.lock svg { width: 11px; height: 11px; }
.apply { flex: 1; }

.palette { width: 16px; display: flex; flex-direction: column; padding: 0 1px 0 2px; background: linear-gradient(90deg, #fff, #f0f0f0 6px); }
.ptop { height: 46px; display: flex; flex-direction: column; align-items: center; gap: 5px; padding-top: 3px; }
.dots { width: 7px; border-top: 1px dotted #999; }
.play { width: 10px; height: 10px; flex: none; border: 1px solid #999; border-radius: 50%; background: #fff; display: flex; align-items: center; justify-content: center; margin-top: -1px; }
.play::after, .play2 { content: ""; border: 3px solid transparent; border-left: 4px solid #111; border-right: 0; }
.ptop svg { width: 9px; height: 9px; }
.swatches { flex: 1; display: flex; flex-direction: column; }
.swatches i { flex: 1; border: 1px solid #777; border-width: 0 1px 1px; }
.nosw { flex: 1; width: 13px; height: 0; min-height: 0; }
.pbot { height: 26px; display: flex; flex-direction: column; align-items: center; justify-content: space-between; padding-top: 6px; }
.pbot svg { width: 8px; height: 12px; }

.menu { position: absolute; left: 302px; top: 194px; width: 140px; padding: 2px 2px 3px; border: 1px solid #989898; box-shadow: 2px 2px 2px rgba(0,0,0,.5);
  background: linear-gradient(90deg, #f0f0f0 18px, #dcdcdc 18px, #dcdcdc 19px, #f0f0f0 19px); font: 9px/14px Roboto, sans-serif; }
.menu button { display: flex; align-items: center; width: 100%; height: 16px; border: 1px solid transparent; color: #111; text-align: left; padding-right: 12px; }
.menu button span { flex: 1; white-space: nowrap; }
.menu svg { width: 13px; height: 13px; margin-right: 10px; color: #3c4266; flex: none; }
.menu button:disabled, .menu button:disabled svg { color: #a5a5a5; }
.menu button.hot { border-color: #aecff7; border-radius: 2px; background: linear-gradient(#f4f7fb, #e4ecf7); }
.menu hr { height: 1px; border: 0; background: #dcdcdc; margin: 3px 0 3px 18px; }
.menu .tick { outline: 1px solid #aecff7; background: #e8f1fb; border-radius: 2px; }
.menu kbd { font: inherit; }
.mark { position: absolute; left: 276px; top: 246px; width: 190px; height: 34px; }

.status { position: relative; height: 35px; flex: none; padding: 1px 3px 0; background: linear-gradient(#fff, #f0f0f0 8px, #f0f0f0 32px, #888 33px, #ccc 34px); }
.srow { display: flex; align-items: center; height: 16px; white-space: nowrap; }
.coord { width: 87px; }
.play2 { width: 0; }
.near { margin-left: 5px; }
.sinfo { flex: 1; padding-left: 339px; }
.proof { width: 12px; height: 12px; margin-right: 176px; }
.objinfo { position: absolute; right: 18px; top: 3px; display: grid; grid-template-columns: 13px 13px 105px; gap: 2px 4px; align-items: center; white-space: nowrap; }
.objinfo svg, .black { width: 12px; height: 13px; }
.black { background: #231815; }
.tray { position: absolute; right: 1px; bottom: 2px; width: 88px; height: 45px; border: 1px solid #b5b5b5; border-radius: 2px; background: linear-gradient(rgba(225,225,225,.4), rgba(255,255,255,.3)); }
```
